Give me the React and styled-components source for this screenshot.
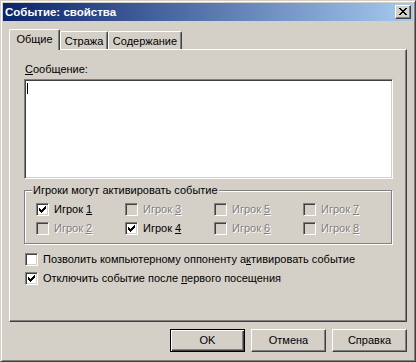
import React from 'react';
import styled, { createGlobalStyle } from 'styled-components';

const Global = createGlobalStyle`
  html, body { margin: 0; padding: 0; background: #d4d0c8; }
  body { font-family: "Liberation Sans", Arial, sans-serif; font-size: 11px; color: #000; }
  * { box-sizing: border-box; }
`;

const Window = styled.div`
  width: 416px;
  height: 362px;
  background: #d4d0c8;
  border: 1px solid;
  border-color: #d4d0c8 #404040 #404040 #d4d0c8;
  box-shadow: inset 1px 1px 0 #fff, inset -1px -1px 0 #808080;
  padding: 2px;
  display: flex;
  flex-direction: column;
`;

const TitleBar = styled.div`
  height: 18px;
  background: linear-gradient(to right, #0a246a 0%, #a6caf0 100%);
  display: flex;
  align-items: center;
  justify-content: space-between;
  padding: 0 2px 0 2px;
`;

const TitleText = styled.span`
  color: #fff;
  font-weight: bold;
  font-size: 11.5px;
  line-height: 13px;
`;

const CloseButton = styled.div`
  width: 16px;
  height: 14px;
  background: #d4d0c8;
  border: 1px solid;
  border-color: #fff #404040 #404040 #fff;
  box-shadow: inset -1px -1px 0 #808080;
  display: flex;
  align-items: center;
  justify-content: center;
  padding-right: 1px;
  padding-bottom: 1px;
`;

const Content = styled.div`
  flex: 1;
  display: flex;
  flex-direction: column;
  padding: 8px 6px 7px 6px;
`;

const TabRow = styled.div`
  display: flex;
  align-items: flex-end;
  height: 20px;
  position: relative;
  z-index: 1;
`;

const Tab = styled.div`
  width: ${p => p.$w}px;
  height: ${p => (p.$active ? 21 : 18)}px;
  margin-bottom: ${p => (p.$active ? -1 : 0)}px;
  background: #d4d0c8;
  border-top: 1px solid #fff;
  border-left: 1px solid #fff;
  border-right: 1px solid #404040;
  border-radius: 2px 2px 0 0;
  box-shadow: inset -1px 0 0 #808080;
  text-align: center;
  padding-top: 3px;
  line-height: 13px;
  white-space: nowrap;
`;

const Panel = styled.div`
  flex: 1;
  border: 1px solid;
  border-color: #fff #404040 #404040 #fff;
  box-shadow: inset -1px -1px 0 #808080;
  padding: 13px 12px 0 14px;
  display: flex;
  flex-direction: column;
  align-items: flex-start;
`;

const Label = styled.div`
  line-height: 13px;
  height: 13px;
  margin-left: 1px;
`;

const U = styled.span`
  text-decoration: underline;
`;

const MessageBox = styled.div`
  margin-top: 3px;
  width: 369px;
  height: 100px;
  background: #fff;
  border: 1px solid;
  border-color: #808080 #fff #fff #808080;
  box-shadow: inset 1px 1px 0 #404040, inset -1px -1px 0 #d4d0c8;
  padding: 3px 2px;
`;

const Caret = styled.div`
  width: 1px;
  height: 11px;
  background: #000;
`;

const GroupBox = styled.div`
  position: relative;
  margin-top: 11px;
  width: 368px;
  height: 54px;
  border: 1px solid #808080;
  box-shadow: inset 1px 1px 0 #fff, 1px 1px 0 #fff;
  padding: 12px 0 0 11px;
`;

const Legend = styled.span`
  position: absolute;
  top: -7px;
  left: 7px;
  padding: 0 1px;
  background: #d4d0c8;
  line-height: 13px;
  white-space: nowrap;
`;

const PlayerGrid = styled.div`
  display: grid;
  grid-template-columns: repeat(4, 89px);
  grid-template-rows: 13px 13px;
  grid-auto-flow: column;
  row-gap: 6px;
`;

const CheckRow = styled.div`
  display: flex;
  align-items: center;
  gap: 5px;
  height: 13px;
  margin-top: ${p => p.$mt || 0}px;
  margin-left: ${p => p.$ml || 0}px;
  line-height: 13px;
  white-space: nowrap;
  color: ${p => (p.$disabled ? '#808080' : '#000')};
  text-shadow: ${p => (p.$disabled ? '1px 1px 0 #fff' : 'none')};
`;

const Box = styled.span`
  flex: none;
  width: 13px;
  height: 13px;
  border: 1px solid;
  border-color: #808080 #fff #fff #808080;
  box-shadow: inset 1px 1px 0 #404040, inset -1px -1px 0 #d4d0c8;
  background: ${p => (p.$disabled ? '#d4d0c8' : '#fff')};
  display: flex;
  align-items: center;
  justify-content: center;
`;

const ButtonRow = styled.div`
  display: flex;
  justify-content: flex-end;
  gap: 6px;
  margin-top: 7px;
`;

const Button = styled.div`
  width: 75px;
  height: 23px;
  display: flex;
  align-items: center;
  justify-content: center;
  line-height: 13px;
  background: #d4d0c8;
  border: 1px solid;
  border-color: ${p => (p.$default ? '#000' : '#fff #404040 #404040 #fff')};
  box-shadow: ${p =>
    p.$default
      ? 'inset 1px 1px 0 #fff, inset -1px -1px 0 #404040, inset -2px -2px 0 #808080'
      : 'inset -1px -1px 0 #808080'};
`;

const checkCols = [
  [2, 4], [3, 5], [4, 6], [3, 5], [2, 4], [1, 3], [0, 2],
];

const CheckMark = () => (
  <svg width="7" height="7" viewBox="0 0 7 7" shapeRendering="crispEdges">
    {checkCols.map(([a, b], i) => (
      <rect key={i} x={i} y={a} width="1" height={b - a + 1} fill="#000" />
    ))}
  </svg>
);

const xRows = [
  [[0, 2], [6, 2]],
  [[1, 2], [5, 2]],
  [[2, 4]],
  [[3, 2]],
  [[2, 4]],
  [[1, 2], [5, 2]],
  [[0, 2], [6, 2]],
];

const CloseX = () => (
  <svg width="8" height="7" viewBox="0 0 8 7" shapeRendering="crispEdges">
    {xRows.map((segs, y) =>
      segs.map(([x, w], k) => <rect key={`${y}-${k}`} x={x} y={y} width={w} height="1" fill="#000" />)
    )}
  </svg>
);

const CheckBox = ({ checked, disabled, children, mt, ml }) => (
  <CheckRow $disabled={disabled} $mt={mt} $ml={ml}>
    <Box $disabled={disabled}>{checked && <CheckMark />}</Box>
    <span>{children}</span>
  </CheckRow>
);

const players = [
  { n: 1, checked: true, disabled: false },
  { n: 2, checked: false, disabled: true },
  { n: 3, checked: false, disabled: true },
  { n: 4, checked: true, disabled: false },
  { n: 5, checked: false, disabled: true },
  { n: 6, checked: false, disabled: true },
  { n: 7, checked: false, disabled: true },
  { n: 8, checked: false, disabled: true },
];

export default function App() {
  return (
    <>
      <Global />
      <Window>
        <TitleBar>
          <TitleText>Событие: свойства</TitleText>
          <CloseButton>
            <CloseX />
          </CloseButton>
        </TitleBar>
        <Content>
          <TabRow>
            <Tab $w={51} $active>Общие</Tab>
            <Tab $w={48}>Стража</Tab>
            <Tab $w={74}>Содержание</Tab>
          </TabRow>
          <Panel>
            <Label>
              <U>С</U>ообщение:
            </Label>
            <MessageBox>
              <Caret />
            </MessageBox>
            <GroupBox>
              <Legend>Игроки могут активировать событие</Legend>
              <PlayerGrid>
                {players.map(p => (
                  <CheckBox key={p.n} checked={p.checked} disabled={p.disabled}>
                    Игрок <U>{p.n}</U>
                  </CheckBox>
                ))}
              </PlayerGrid>
            </GroupBox>
            <CheckBox mt={9} ml={1}>
              Позволить компьютерному оппоненту а<U>к</U>тивировать событие
            </CheckBox>
            <CheckBox checked mt={6} ml={1}>
              Отключить событие после <U>п</U>ервого посещения
            </CheckBox>
          </Panel>
          <ButtonRow>
            <Button $default>OK</Button>
            <Button>Отмена</Button>
            <Button>Справка</Button>
          </ButtonRow>
        </Content>
      </Window>
    </>
  );
}
